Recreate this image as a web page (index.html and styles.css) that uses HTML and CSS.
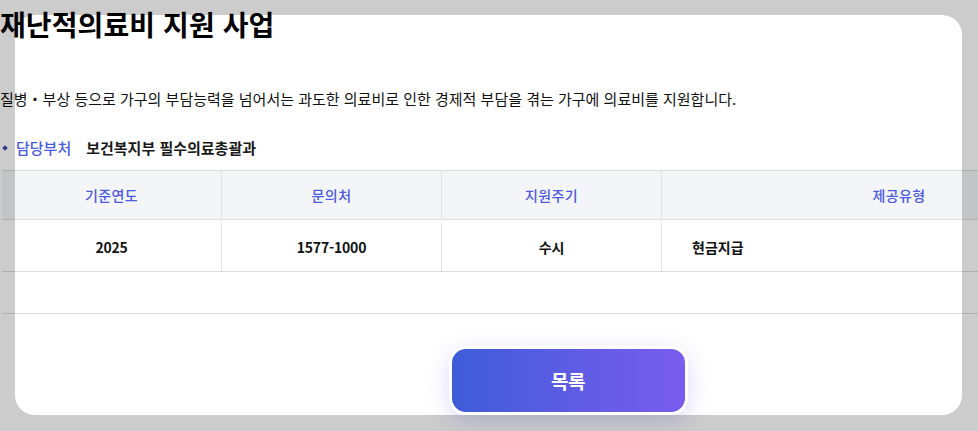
FILE: index.html
```html
<!DOCTYPE html>
<html lang="ko">
<head>
<meta charset="utf-8">
<title>재난적의료비 지원 사업</title>
<link rel="stylesheet" href="styles.css">
</head>
<body>
<div class="page">
  <h1 class="title">재난적의료비 지원 사업</h1>
  <p class="desc">질병・부상 등으로 가구의 부담능력을 넘어서는 과도한 의료비로 인한 경제적 부담을 겪는 가구에 의료비를 지원합니다.</p>
  <div class="dept">
    <span class="dept-label">담당부처</span>
    <span class="dept-value">보건복지부 필수의료총괄과</span>
  </div>
  <div class="table">
    <div class="row head">
      <div class="cell c1">기준연도</div>
      <div class="cell c2">문의처</div>
      <div class="cell c3">지원주기</div>
      <div class="cell c4">제공유형</div>
    </div>
    <div class="row body">
      <div class="cell c1">2025</div>
      <div class="cell c2">1577-1000</div>
      <div class="cell c3">수시</div>
      <div class="cell c4 left">현금지급</div>
    </div>
  </div>
  <div class="divider"></div>
  <div class="actions">
    <button class="btn-list" type="button">목록</button>
  </div>
</div>
<div class="spotlight"></div>
</body>
</html>
```
FILE: styles.css
```css
html, body {
  margin: 0;
  padding: 0;
  background: #ffffff;
  overflow: hidden;
  width: 978px;
  height: 431px;
}
body {
  font-family: "Noto Sans CJK KR", "Noto Sans", sans-serif;
  color: #111111;
}
.page {
  width: 1136px;
}
.title {
  margin: 4px 0 0;
  font-size: 28px;
  line-height: 40px;
  font-weight: 700;
  letter-spacing: 0.1px;
  color: #000000;
}
.desc {
  margin: 44px 0 0;
  font-size: 15px;
  line-height: 22px;
  letter-spacing: 0;
  color: #111111;
}
.dept {
  margin-top: 27px;
  height: 22px;
  display: flex;
  align-items: center;
  font-size: 15px;
  line-height: 22px;
  letter-spacing: 0;
}
.dept-label {
  position: relative;
  padding-left: 16px;
  color: #4a5ae0;
  font-weight: 500;
}
.dept-label::before {
  content: "";
  position: absolute;
  left: 3px;
  top: 9px;
  width: 4px;
  height: 4px;
  background: #3a4bb8;
  transform: rotate(45deg);
}
.dept-value {
  margin-left: 15px;
  font-weight: 700;
  color: #1a1a1a;
}
.table {
  margin: 11px 0 0 2px;
  border-top: 1px solid #dcdcdc;
}
.row {
  display: grid;
  grid-template-columns: 219px 220px 220px 1fr;
  border-bottom: 1px solid #dcdcdc;
}
.row.head {
  height: 48px;
  background: #f4f5f9;
}
.row.body {
  height: 51px;
}
.cell {
  display: flex;
  align-items: center;
  justify-content: center;
  font-size: 14px;
}
.head .cell {
  color: #4a5ae0;
  font-weight: 500;
  letter-spacing: 0.4px;
}
.head .cell + .cell {
  border-left: 1px solid #e2e2e2;
}
.body .cell {
  color: #111111;
  font-weight: 700;
  letter-spacing: -0.2px;
  margin-top: 3px;
}
.body .cell + .cell {
  border-left: 1px solid #e2e2e2;
}
.cell.left {
  justify-content: flex-start;
  padding-left: 30px;
  letter-spacing: 0;
}
.divider {
  margin: 41px 0 0 2px;
  border-top: 1px solid #dcdcdc;
}
.actions {
  display: flex;
  justify-content: center;
  margin-top: 32px;
}
.btn-list {
  width: 239px;
  height: 69px;
  border: 3px solid #ffffff;
  border-radius: 17px;
  background: linear-gradient(90deg, #3e5cd8 0%, #5d5ce4 50%, #795cee 100%);
  color: #ffffff;
  font-family: inherit;
  font-size: 19px;
  font-weight: 700;
  letter-spacing: -0.5px;
  box-shadow: 0 6px 22px rgba(90, 80, 230, 0.22);
}
.spotlight {
  position: absolute;
  left: 15px;
  top: 15px;
  width: 947px;
  height: 400px;
  border-radius: 20px;
  box-shadow: 0 0 0 2000px rgba(0, 0, 0, 0.2);
  pointer-events: none;
}
```
